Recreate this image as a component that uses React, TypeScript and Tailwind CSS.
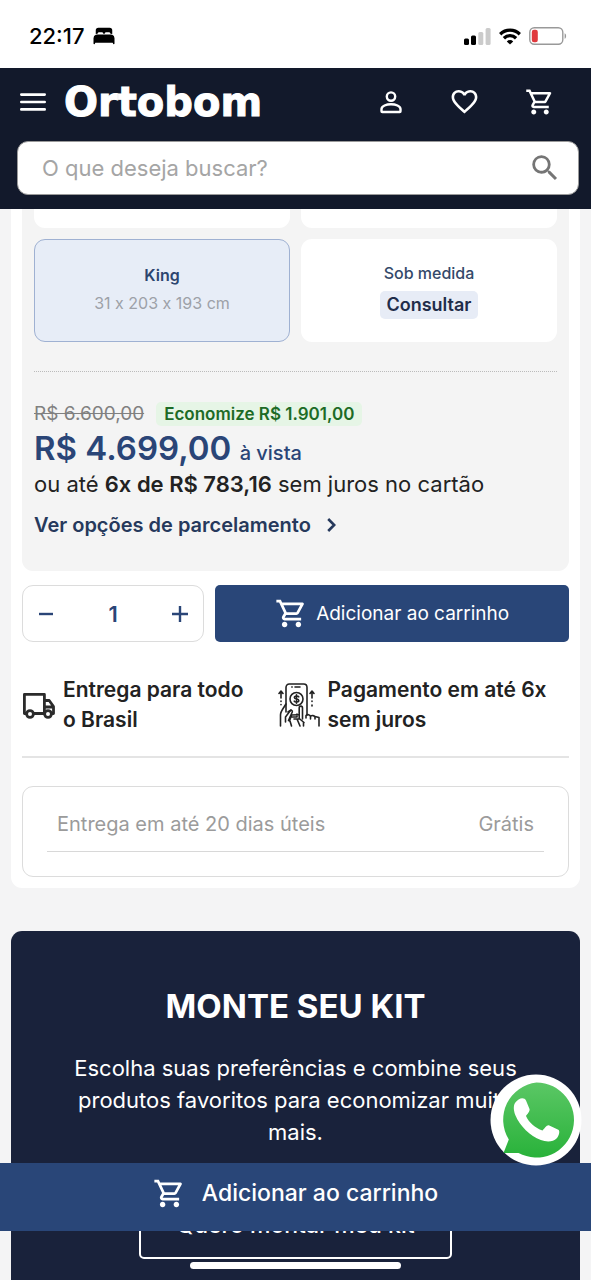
import type { ReactNode } from "react";
import { IoBed } from "react-icons/io5";
import {
  MdFavoriteBorder,
  MdOutlineShoppingCart,
  MdSearch,
} from "react-icons/md";

function StatusBar() {
  return (
    <div className="flex h-[68px] items-center justify-between bg-white pt-1 pr-6 pl-[29px] text-black">
      <div className="flex items-center gap-2">
        <span className="text-[22px] leading-7 font-medium">22:17</span>
        <IoBed className="size-6" />
      </div>
      <div className="flex items-center gap-2">
        <svg className="h-[17px] w-[27px]" viewBox="0 0 27 17">
          <rect x="0" y="10.5" width="5" height="6.5" rx="1.5" />
          <rect x="7" y="7.5" width="5" height="9.5" rx="1.5" />
          <rect x="14.3" y="4" width="5" height="13" rx="1.5" fill="#cbcbcb" />
          <rect x="21.6" y="0" width="5" height="17" rx="1.5" fill="#cbcbcb" />
        </svg>
        <svg className="h-[17px] w-[22px]" viewBox="0 0 22 17" fill="none" stroke="#000" strokeWidth="3.3">
          <path d="M1.2 6.2a14 14 0 0 1 19.6 0" />
          <path d="M4.9 10.2a8.7 8.7 0 0 1 12.2 0" />
          <path d="M11 16.6 7.8 13.4a4.6 4.6 0 0 1 6.4 0z" fill="#000" stroke="none" />
        </svg>
        <svg className="h-[18px] w-[38px]" viewBox="0 0 38 18">
          <rect x="0.8" y="0.8" width="33" height="16.4" rx="4.5" fill="none" stroke="#999" strokeWidth="1.4" />
          <rect x="2.8" y="2.8" width="6" height="12.4" rx="2.2" fill="#e0393e" />
          <path d="M35.6 6.2c2 .8 2 4.8 0 5.6z" fill="#999" />
        </svg>
      </div>
    </div>
  );
}

function Header() {
  return (
    <header className="bg-[#12192b] pr-3 pb-[14px] pl-[17px]">
      <div className="flex h-[73px] items-center pr-6 pb-[6px] pl-[3px] text-white">
        <button aria-label="Menu">
          <svg className="h-[18px] w-[26px]" viewBox="0 0 26 18" stroke="currentColor" strokeWidth="2.6" strokeLinecap="round">
            <path d="M1.3 1.6h23.4M1.3 9h23.4M1.3 16.4h23.4" />
          </svg>
        </button>
        <a
          href="#"
          className="ml-[18px] font-['DejaVu_Sans'] text-[40px] leading-10 font-bold [-webkit-text-stroke:1px_white]"
        >
          Ortobom
        </a>
        <div className="ml-auto flex items-center gap-[45px]">
          <button aria-label="Minha conta">
            <svg className="size-[26px]" viewBox="0 0 26 26" fill="none" stroke="currentColor" strokeWidth="2.4">
              <circle cx="13" cy="7.6" r="4.2" />
              <path d="M3.500 22.200v-2.100c0-3 4.900-4.900 9.500-4.900s9.500 1.900 9.500 4.900v2.100c0 .5-.4.8-.8.8H4.300c-.5 0-.8-.4-.8-.8z" />
            </svg>
          </button>
          <button aria-label="Favoritos">
            <MdFavoriteBorder className="size-[31px]" />
          </button>
          <button aria-label="Carrinho">
            <MdOutlineShoppingCart className="size-[30px]" />
          </button>
        </div>
      </div>
      <div className="flex h-[54px] items-center rounded-[11px] border border-[#9a9a9a] bg-white pr-4 pl-6">
        <input
          aria-label="Buscar"
          placeholder="O que deseja buscar?"
          className="min-w-0 flex-1 text-[22px] leading-7 outline-none placeholder:text-[#a5a5a5]"
        />
        <button aria-label="Pesquisar">
          <MdSearch className="size-[34px] text-[#757575]" />
        </button>
      </div>
    </header>
  );
}

function SizeOptions() {
  return (
    <div className="grid grid-cols-2 gap-x-[11px]">
      <div className="h-[19px] rounded-b-[11px] bg-white" />
      <div className="h-[19px] rounded-b-[11px] bg-white" />
      <button className="mt-[11px] flex h-[103px] flex-col items-center justify-center gap-1 rounded-[11px] border border-[#9fb1d2] bg-[#e7edf7] pb-1">
        <span className="text-[16px] leading-6 font-semibold text-[#2c456f]">King</span>
        <span className="text-[16px] leading-6 text-[#9da1a8] [font-feature-settings:'calt'_0]">
          31 x 203 x 193 cm
        </span>
      </button>
      <button className="mt-[11px] flex h-[103px] flex-col items-center justify-center gap-2 rounded-[11px] bg-white">
        <span className="text-[16px] leading-5 font-medium text-[#34496a]">Sob medida</span>
        <span className="rounded-[5px] bg-[#e7ecf6] px-[6px] text-[18px] leading-7 font-semibold text-[#1f2d4a]">
          Consultar
        </span>
      </button>
    </div>
  );
}

function Price() {
  return (
    <div className="flex flex-col">
      <div className="flex items-center gap-3 text-[#808080]">
        <s className="text-[19px] leading-6">R$ 6.600,00</s>
        <span className="rounded-[5px] bg-[#e6f5e6] px-2 text-[17px] leading-6 font-semibold text-[#1d6b26]">
          Economize R$ 1.901,00
        </span>
      </div>
      <p className="mt-[6px] text-[33px] leading-8 font-semibold text-[#2a4577]">
        R$ 4.699,00 <span className="text-[20px] font-medium">à vista</span>
      </p>
      <p className="mt-px text-[22px] leading-7 text-[#222]">
        ou até <b className="font-semibold">6x de R$ 783,16</b> sem juros no cartão
      </p>
      <a href="#" className="mt-[13px] flex items-center gap-4 text-[20px] leading-7 font-semibold text-[#26395c]">
        Ver opções de parcelamento
        <svg className="h-[14px] w-[9px]" viewBox="0 0 9 14" fill="none" stroke="currentColor" strokeWidth="2.6">
          <path d="m1.200 1 6 6-6 6" />
        </svg>
      </a>
    </div>
  );
}

function Feature({ icon, children }: { icon: ReactNode; children: ReactNode }) {
  return (
    <div className="flex items-center gap-2 text-[21px] leading-[30px] font-semibold text-[#222]">
      {icon}
      <p>{children}</p>
    </div>
  );
}

function TruckIcon() {
  return (
    <svg className="h-[27px] w-[33px] shrink-0" viewBox="0 0 33 27" fill="none" stroke="#2b2b2b" strokeWidth="2.8" strokeLinejoin="round">
      <path d="M4.500 21.500H2.400V2.400h20v19.100H12M22.400 8.500h4.800l4.300 6v7h-1.800M22.400 15h9" />
      <circle cx="8" cy="22" r="3.400" fill="#fff" />
      <circle cx="26" cy="22" r="3.400" fill="#fff" />
    </svg>
  );
}

function PhonePayIcon() {
  return (
    <svg className="h-[45px] w-[42px] shrink-0" viewBox="0 0 42 45" fill="none" stroke="#222" strokeWidth="1.6" strokeLinecap="round" strokeLinejoin="round">
      <path d="M8 29V4.500C8 2.600 9.400 1 11.300 1h14.400C27.600 1 29 2.600 29 4.500V32" />
      <path d="M13.800 4h.4M17 4h5M10 29l3-2" />
      <circle cx="18.500" cy="16" r="6.500" />
      <path d="M20.800 13.800c-.6-1-4.400-1.300-4.400.7 0 2.200 4.400.9 4.400 3.100 0 2-3.900 1.800-4.600.5M18.500 11.700v8.600" />
      <path d="M3 15V9M1 10.500l2-2.500 2 2.500M34 15V9M32 10.500 34 8l2 2.500M3 18v.5M3 21.500v.2M34 18v.5M34 22v1" />
      <path d="M2.500 43V32c0-4 2.500-6 5.500-11M7.500 34l4.500-6c1-1.300 2.800-.5 2.300 1L12 34l-1.500 3.500M7.500 34v5M11.500 38l2-6 7-.2M14 34h5v-3M12 38l1.500 5M19 36l3 7M16 36h5" />
      <path d="M24.500 36V25c0-2.500-3.300-2.500-3.300 0v10.500l4.800 4M28 35v-2.500M32.500 36v-3M37 36v-2.500l4 1V43M28 32.500c1.500-1.500 3.800-1 4.500.8 1.500-1.200 3.600-.9 4.500.7M25.500 43v-4" />
    </svg>
  );
}

function WhatsAppIcon() {
  return (
    <svg className="size-[92px]" viewBox="0 0 92 92">
      <defs>
        <linearGradient id="wa" x1="0" y1="0" x2="0" y2="1">
          <stop offset="0" stopColor="#5bc765" />
          <stop offset="1" stopColor="#29b23a" />
        </linearGradient>
      </defs>
      <circle cx="46" cy="46" r="45.500" fill="#fff" />
      <path d="M46.500 8.500a37.500 37.500 0 1 1-18 70.400L13.500 79l5.300-13.500A37.500 37.500 0 0 1 46.500 8.500z" fill="url(#wa)" />
      <path
        d="M25 29c4-6 9.500-6 11-2.500l3.500 8.500c.8 2-2.500 5.500-3.500 7 3 6.500 9 12 16.500 14.500 1.800-1.500 4.300-6 6.800-5l9 4.300c2 1 .7 6-1.500 8.400-3.800 3.800-10 4-16 1.800C40 62 30 52 25.500 41.500c-1.700-4.200-2.500-9-.5-12.500z"
        fill="#fff"
      />
    </svg>
  );
}

export default function App() {
  return (
    <div className="flex min-h-screen flex-col bg-[#f4f4f5] font-[Inter,sans-serif]">
      <StatusBar />
      <Header />

      <main className="flex flex-1 flex-col gap-[43px] px-[11px]">
        <section className="rounded-b-[11px] bg-white px-[11px] pb-[11px]">
          <div className="rounded-b-[11px] bg-[#f4f4f4] px-3 pb-8">
            <SizeOptions />
            <hr className="mt-[29px] mb-[30px] border-dotted border-[#bbb]" />
            <Price />
          </div>

          <div className="mt-[14px] flex h-[57px] gap-[11px]">
            <div className="flex w-1/3 items-center justify-between rounded-[11px] border border-[#dcdcdc] px-[15px] text-[#2a4577]">
              <button aria-label="Diminuir quantidade">
                <svg className="size-4" viewBox="0 0 16 16" stroke="currentColor" strokeWidth="2.400">
                  <path d="M1 8h14" />
                </svg>
              </button>
              <input
                aria-label="Quantidade"
                defaultValue="1"
                className="w-10 text-center text-[22px] leading-7 font-semibold outline-none"
              />
              <button aria-label="Aumentar quantidade">
                <svg className="size-4" viewBox="0 0 16 16" stroke="currentColor" strokeWidth="2.400">
                  <path d="M0 8h16M8 0v16" />
                </svg>
              </button>
            </div>
            <button className="flex flex-1 items-center justify-center gap-2 rounded-[5px] bg-[#294678] text-[19px] leading-7 text-white">
              <MdOutlineShoppingCart className="size-[33px]" />
              Adicionar ao carrinho
            </button>
          </div>

          <div className="mt-[33px] flex gap-[34px] border-b-2 border-[#e4e4e4] pb-[21px]">
            <Feature icon={<TruckIcon />}>
              Entrega para todo
              <br />o Brasil
            </Feature>
            <Feature icon={<PhonePayIcon />}>
              Pagamento em até 6x
              <br />
              sem juros
            </Feature>
          </div>

          <div className="mt-7 rounded-[11px] border border-[#dcdcdc] px-6 pt-[22px] pb-6 text-[20px] leading-[30px] text-[#9b9b9b]">
            <div className="flex justify-between border-b border-[#d8d8d8] px-[10px] pb-3">
              <span>Entrega em até 20 dias úteis</span>
              <span>Grátis</span>
            </div>
          </div>
        </section>

        <section className="flex flex-1 flex-col items-center rounded-t-[11px] bg-[#19223b] px-[56px] pt-[53px] pb-[21px] text-center text-white">
          <h2 className="text-[33px] leading-[44px] font-bold">MONTE SEU KIT</h2>
          <p className="mt-6 text-[22px] leading-[32px]">
            Escolha suas preferências e combine seus produtos favoritos para economizar muito mais.
          </p>
          <button className="mt-auto h-[68px] w-[313px] rounded-[5px] border-2 border-white text-[23px] leading-7 font-medium">
            Quero montar meu kit
          </button>
        </section>
      </main>

      <button className="fixed inset-x-0 bottom-[49px] flex h-[68px] items-center justify-center gap-4 bg-[#294678] pb-2 text-[23px] leading-7 font-medium text-white">
        <MdOutlineShoppingCart className="size-[33px]" />
        Adicionar ao carrinho
      </button>
      <a href="#" aria-label="WhatsApp" className="fixed right-[9px] bottom-[114px]">
        <WhatsAppIcon />
      </a>
      <div className="fixed inset-x-0 bottom-[11px] mx-auto h-[7px] w-[211px] rounded-full bg-white" />
    </div>
  );
}
